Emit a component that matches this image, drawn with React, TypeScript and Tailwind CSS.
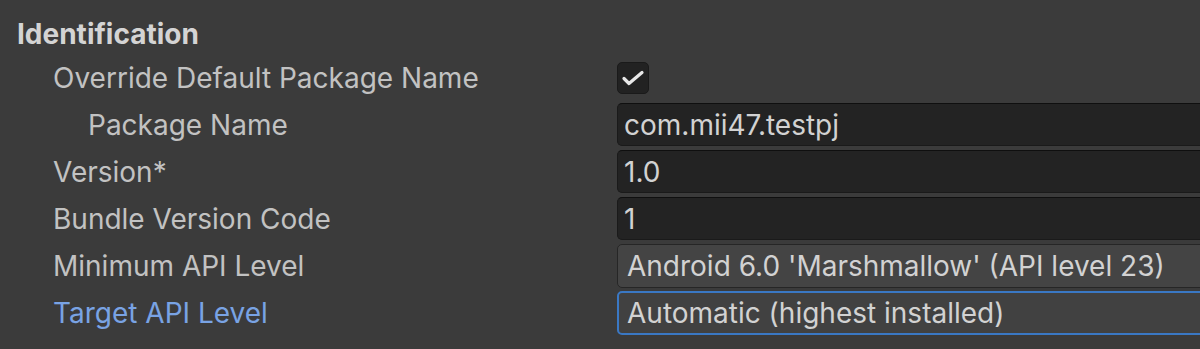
import React from "react";

const FONT = { fontFamily: "Inter, 'Noto Sans', sans-serif" };

function Label({ text, indent = 1, blue = false }: { text: string; indent?: number; blue?: boolean }) {
  return (
    <div
      className={`w-[617px] shrink-0 ${indent === 2 ? "pl-[88px]" : "pl-[53px]"} ${
        blue ? "text-[#79a3e4]" : "text-[#c2c2c2]"
      }`}
    >
      {text}
    </div>
  );
}

function TextField({ value }: { value: string }) {
  return (
    <div className="h-[43px] w-[620px] shrink-0 rounded-[5px] border border-[#1a1a1a] border-t-[#0f0f0f] bg-[#232323] pl-[6px] flex items-center text-[#d2d2d2]">
      {value}
    </div>
  );
}

function Dropdown({ value, focused = false }: { value: string; focused?: boolean }) {
  return (
    <div
      className={`h-[44px] w-[620px] shrink-0 rounded-[5px] flex items-center text-[#d2d2d2] ${
        focused ? "border-2 border-[#3a78c4] bg-[#414141] pl-[8px]" : "border border-[#262626] bg-[#444444] pl-[9px]"
      }`}
    >
      {value}
    </div>
  );
}

export default function App() {
  return (
    <div
      className="w-[1200px] h-[349px] overflow-hidden bg-[#3b3b3b] pt-[14px] text-[28px] leading-none"
      style={FONT}
    >
      {/* header */}
      <div className="h-[40px] flex items-center pl-[17px] font-bold text-[#d4d4d4]">Identification</div>

      <div className="flex flex-col">
        <div className="h-[47px] flex items-center">
          <Label text="Override Default Package Name" />
          <div className="w-[32px] h-[32px] rounded-[5px] bg-[#222222] border border-[#1a1a1a]">
            <svg width="30" height="30" viewBox="1 1 30 30" fill="none">
              <path d="M7 16.5 L12 21.5 L25 10.5" stroke="#e8e8e8" strokeWidth="3.2" strokeLinecap="round" strokeLinejoin="round" />
            </svg>
          </div>
        </div>

        <div className="h-[47px] flex items-center">
          <Label text="Package Name" indent={2} />
          <TextField value="com.mii47.testpj" />
        </div>

        <div className="h-[47px] flex items-center">
          <Label text="Version*" />
          <TextField value="1.0" />
        </div>

        <div className="h-[47px] flex items-center">
          <Label text="Bundle Version Code" />
          <TextField value="1" />
        </div>

        <div className="h-[47px] flex items-center">
          <Label text="Minimum API Level" />
          <Dropdown value="Android 6.0 'Marshmallow' (API level 23)" />
        </div>

        <div className="h-[47px] flex items-center">
          <Label text="Target API Level" blue />
          <Dropdown value="Automatic (highest installed)" focused />
        </div>
      </div>
    </div>
  );
}
